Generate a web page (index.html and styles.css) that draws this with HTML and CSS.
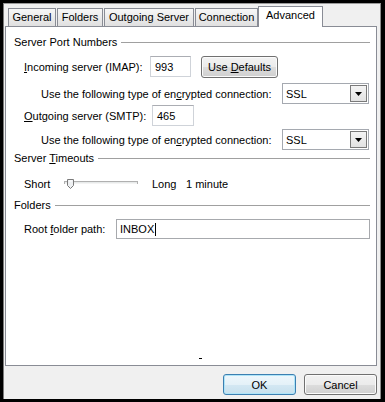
FILE: index.html
```html
<!DOCTYPE html>
<html>
<head>
<meta charset="utf-8">
<link rel="stylesheet" href="styles.css">
</head>
<body>
<div class="dialog">
  <div class="tabs">
    <div class="tab t-general">General</div>
    <div class="tab t-folders">Folders</div>
    <div class="tab t-outgoing">Outgoing Server</div>
    <div class="tab t-connection">Connection</div>
    <div class="tab active t-advanced">Advanced</div>
  </div>
  <div class="panel">
    <div class="g-title t1"><span>Server Port Numbers</span><i class="rule"></i></div>
    <div class="row r-in">
      <span class="lbl w-in"><u>I</u>ncoming server (IMAP):</span>
      <div class="field f-in">993</div>
      <div class="btn b-defaults"><span>Use <u>D</u>efaults</span></div>
    </div>
    <div class="row r-enc1 indent">
      <span class="lbl w-enc">Use the following type of en<u>c</u>rypted connection:</span>
      <div class="combo"><span>SSL</span><i class="drop"><svg width="7" height="4" viewBox="0 0 7 4"><path d="M0 0H7L3.5 4Z" fill="#000"/></svg></i></div>
    </div>
    <div class="row r-out">
      <span class="lbl w-out"><u>O</u>utgoing server (SMTP):</span>
      <div class="field f-out">465</div>
    </div>
    <div class="row r-enc2 indent">
      <span class="lbl w-enc">Use the following type of en<u>c</u>rypted connection:</span>
      <div class="combo"><span>SSL</span><i class="drop"><svg width="7" height="4" viewBox="0 0 7 4"><path d="M0 0H7L3.5 4Z" fill="#000"/></svg></i></div>
    </div>
    <div class="g-title t2"><span>Server <u>T</u>imeouts</span><i class="rule"></i></div>
    <div class="row r-short">
      <span class="lbl w-short">Short</span>
      <svg class="slider" width="74" height="10" viewBox="0 0 74 10">
        <rect x="0.5" y="2.5" width="73" height="2" fill="#e7eaea" stroke="#b0b0b0"/>
        <line x1="1" y1="4.5" x2="73" y2="4.5" stroke="#f4f4f4"/>
        <path d="M3.5 0.5H9.5V6.5L6.5 9.5L3.5 6.5Z" fill="#eef0f2" stroke="#7a7a7a"/>
        <line x1="5" y1="2" x2="8" y2="2" stroke="#ffffff"/>
      </svg>
      <span class="lbl long">Long</span>
      <span class="lbl">1 minute</span>
    </div>
    <div class="g-title t3"><span>Folders</span><i class="rule"></i></div>
    <div class="row r-root">
      <span class="lbl w-root">Root <u>f</u>older path:</span>
      <div class="field f-root">INBOX<i class="caret"></i></div>
    </div>
    <div class="dash"></div>
  </div>
  <div class="footer">
    <div class="btn b-ok">OK</div>
    <div class="btn b-cancel">Cancel</div>
  </div>
</div>
</body>
</html>
```
FILE: styles.css
```css
* { box-sizing: border-box; }
html, body { margin: 0; padding: 0; }
body {
  background: #000;
  width: 385px;
  height: 402px;
  overflow: hidden;
  font-family: "Liberation Sans", Arial, sans-serif;
  font-size: 11px;
  color: #000;
}
u { text-decoration: underline; text-underline-offset: 1px; }
.dialog {
  margin: 3px 4px 0 3px;
  width: 378px;
  height: 396px;
  background: #f0f0f0;
  border-left: 1px solid #7b7b7b;
  border-top: 1px solid #9a9a9a;
  border-right: 1px solid #8c8c8c;
  padding: 2px 3px 0 1px;
  display: flex;
  flex-direction: column;
}
.tabs {
  display: flex;
  align-items: flex-end;
  height: 20px;
  padding-left: 3px;
}
.tab {
  height: 18px;
  border: 1px solid #898c95;
  border-bottom: none;
  background: linear-gradient(#f7f7f7, #ebebeb 50%, #e0e0e0);
  display: flex;
  align-items: center;
  justify-content: center;
  padding-bottom: 1px;
  margin-right: 1px;
  white-space: nowrap;
}
.t-general { width: 48px; }
.t-folders { width: 46px; }
.t-outgoing { width: 90px; }
.t-connection { width: 63px; }
.tab.active {
  width: 65px;
  height: 21px;
  margin-right: 0;
  margin-left: -1px;
  margin-bottom: -1px;
  background: #fff;
  position: relative;
  z-index: 1;
  padding-bottom: 4px;
}
.panel {
  height: 340px;
  background: #fff;
  border: 1px solid #898c95;
  padding: 8px 6px 0 8px;
  display: flex;
  flex-direction: column;
}
.g-title {
  height: 14px;
  display: flex;
  align-items: center;
  white-space: nowrap;
}
.g-title .rule {
  flex: 1;
  height: 1px;
  background: #a0a0a0;
  margin-left: 4px;
}
.row {
  display: flex;
  align-items: center;
  padding-left: 10px;
  white-space: nowrap;
}
.row.indent { padding-left: 27px; }
.lbl { display: inline-block; }
.r-in { height: 23px; margin-top: 6px; }
.r-enc1 { height: 21px; margin-top: 5px; }
.r-out { height: 21px; margin-top: 1px; }
.r-enc2 { height: 21px; margin-top: 3px; }
.t2 { margin-top: 1px; }
.r-short { height: 20px; margin-top: 9px; }
.t3 { margin-top: 4px; }
.r-root { height: 20px; margin-top: 7px; }

.w-in { width: 126px; }
.w-enc { width: 241px; }
.w-out { width: 128px; }
.w-short { width: 40px; }
.w-root { width: 92px; }
.long { margin-left: 14px; width: 34px; }

.field {
  height: 21px;
  border: 1px solid #cfd3d9;
  border-top-color: #abadb3;
  background: #fff;
  display: flex;
  align-items: center;
  padding-left: 4px;
}
.f-in { width: 41px; }
.f-out { width: 42px; }
.f-root {
  flex: 1;
  height: 20px;
  border-color: #a7a9ad;
  padding-left: 3px;
}
.caret {
  width: 1px;
  height: 13px;
  background: #000;
  margin-left: 1px;
}
.btn {
  height: 22px;
  border: 1px solid #707070;
  border-radius: 3px;
  background: linear-gradient(#f2f2f2, #ebebeb 50%, #dddddd 50%, #cfcfcf);
  box-shadow: inset 0 0 0 1px #fbfbfb;
  display: flex;
  align-items: center;
  justify-content: center;
  white-space: nowrap;
}
.b-defaults { width: 77px; margin-left: 10px; }
.combo {
  width: 87px;
  height: 21px;
  border: 1px solid #a5a9b0;
  background: #fff;
  display: flex;
  align-items: center;
  justify-content: space-between;
  padding: 0 1px 0 3px;
}
.drop {
  width: 17px;
  height: 17px;
  border: 1px solid #7a7a7a;
  background: linear-gradient(#f4f4f4, #e2e2e2);
  display: flex;
  align-items: center;
  justify-content: center;
}
.drop svg { display: block; }
.slider { display: block; }
.dash {
  margin-top: auto;
  margin-left: 185px;
  margin-bottom: 6px;
  width: 3px;
  height: 1px;
  background: #000;
}
.footer {
  display: flex;
  justify-content: flex-end;
  margin-top: 8px;
  gap: 8px;
}
.b-ok, .b-cancel { width: 73px; height: 21px; }
.b-ok {
  border-color: #3c7fb1;
  box-shadow: inset 0 0 0 1px #aee4f8;
  background: linear-gradient(#eef7fc, #e4f1f8 50%, #d4e8f3 50%, #c6e0ee);
}
```
